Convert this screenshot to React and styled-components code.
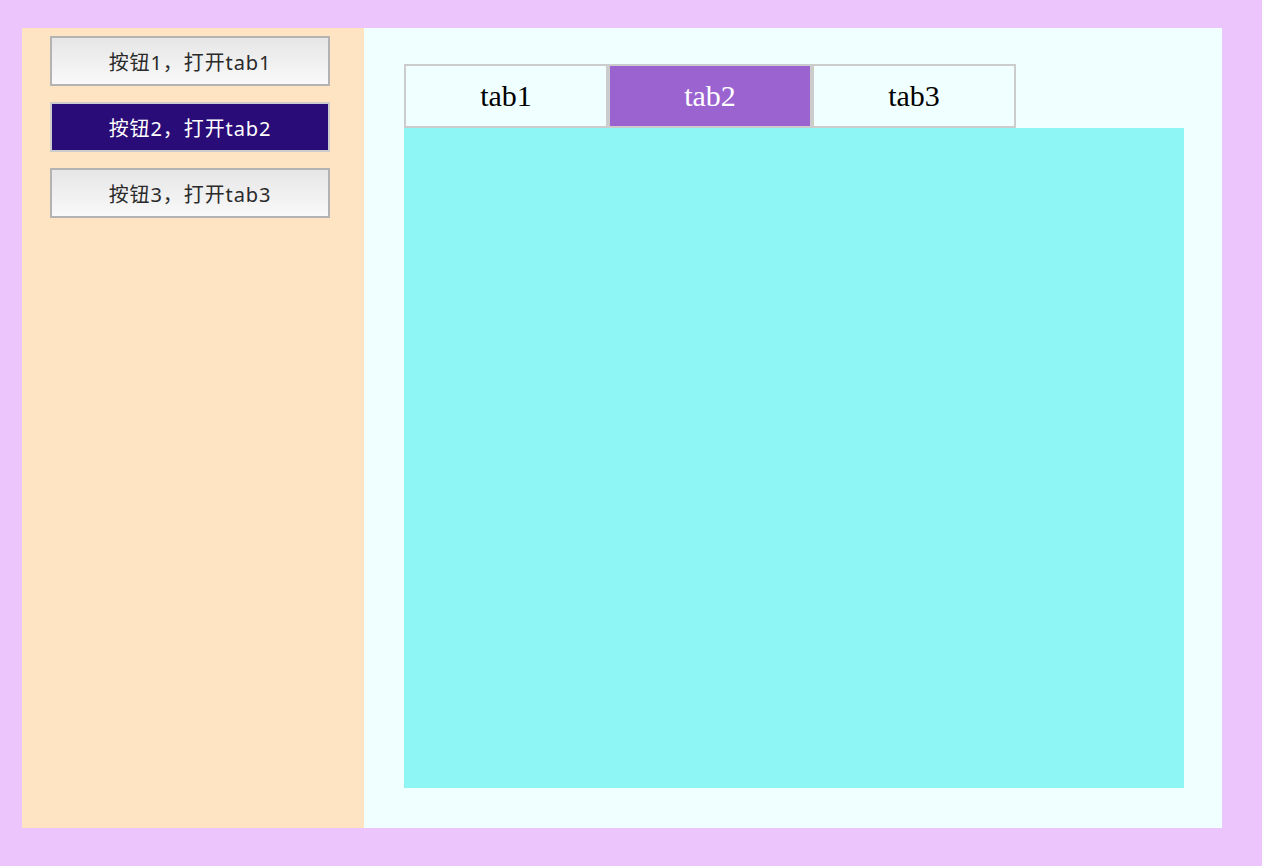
import React, { useState } from "react";
import styled, { createGlobalStyle } from "styled-components";

const Global = createGlobalStyle`
  html, body { margin: 0; padding: 0; background: #ebc5fc; }
  body { padding: 28px 22px; }
`;

const Frame = styled.div`
  display: flex;
  width: 1200px;
  height: 800px;
`;

const Sidebar = styled.div`
  width: 342px;
  flex: none;
  background: #ffe4c4;
  box-sizing: border-box;
  padding: 8px 28px;
  display: flex;
  flex-direction: column;
  gap: 16px;
`;

const SideButton = styled.button`
  width: 280px;
  height: 50px;
  box-sizing: border-box;
  border: 2px solid ${(p) => (p.$active ? "#cccccc" : "#b3b3b3")};
  background: ${(p) =>
    p.$active ? "#2a0c78" : "linear-gradient(#e6e6e6, #f9f9f9)"};
  color: ${(p) => (p.$active ? "#ffffff" : "#2a2a2a")};
  font-family: "Noto Sans", "Noto Sans CJK SC", sans-serif;
  font-size: 20px;
  letter-spacing: 0.9px;
  padding: 0;
  margin: 0;
  cursor: pointer;
`;

const Main = styled.div`
  flex: 1;
  background: #f0ffff;
  box-sizing: border-box;
  padding: 36px 38px 40px 40px;
  display: flex;
  flex-direction: column;
`;

const TabRow = styled.div`
  display: flex;
`;

const Tab = styled.div`
  width: 204px;
  height: 64px;
  box-sizing: border-box;
  border: 2px solid #cccccc;
  background: ${(p) => (p.$active ? "#9b63d0" : "#f0ffff")};
  color: ${(p) => (p.$active ? "#ffffff" : "#000000")};
  font-family: "Liberation Serif", serif;
  font-size: 30px;
  display: flex;
  align-items: center;
  justify-content: center;
  cursor: pointer;
`;

const Content = styled.div`
  flex: 1;
  background: #8ef6f4;
`;

export default function App() {
  const [active, setActive] = useState(1);
  const items = [1, 2, 3];
  return (
    <>
      <Global />
      <Frame>
        <Sidebar>
          {items.map((n, i) => (
            <SideButton key={n} $active={active === i} onClick={() => setActive(i)}>
              按钮{n}，打开tab{n}
            </SideButton>
          ))}
        </Sidebar>
        <Main>
          <TabRow>
            {items.map((n, i) => (
              <Tab key={n} $active={active === i} onClick={() => setActive(i)}>
                tab{n}
              </Tab>
            ))}
          </TabRow>
          <Content />
        </Main>
      </Frame>
    </>
  );
}
